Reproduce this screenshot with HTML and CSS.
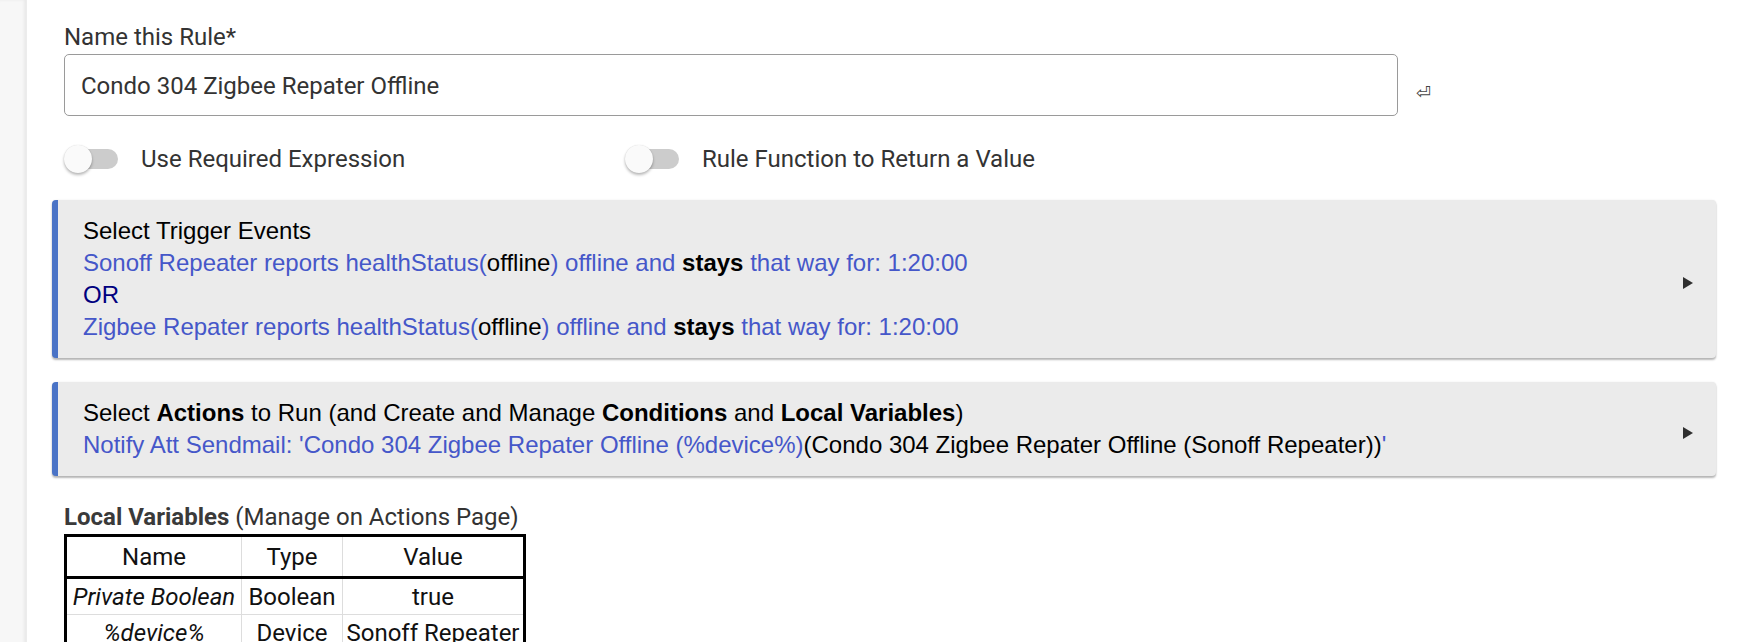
FILE: index.html
```html
<!DOCTYPE html>
<html>
<head>
<meta charset="utf-8">
<link rel="stylesheet" href="styles.css">
</head>
<body>
<div class="page">
  <div class="side"></div>
  <main class="main">
    <div class="field">
      <label class="label">Name this Rule*</label>
      <div class="input-row">
        <div class="input">Condo 304 Zigbee Repater Offline</div>
        <span class="enter">&#x23CE;</span>
      </div>
    </div>

    <div class="toggles">
      <div class="toggle-item">
        <span class="switch"><span class="track"></span><span class="thumb"></span></span>
        <span class="toggle-text">Use Required Expression</span>
      </div>
      <div class="toggle-item">
        <span class="switch"><span class="track"></span><span class="thumb"></span></span>
        <span class="toggle-text">Rule Function to Return a Value</span>
      </div>
    </div>

    <div class="card card-first">
      <div class="card-body">
        <div>Select Trigger Events</div>
        <div class="blue">Sonoff Repeater reports healthStatus(<span class="black">offline</span>) offline and <b class="black">stays</b> that way for: 1:20:00</div>
        <div class="navy">OR</div>
        <div class="blue">Zigbee Repater reports healthStatus(<span class="black">offline</span>) offline and <b class="black">stays</b> that way for: 1:20:00</div>
      </div>
      <svg class="arrow" width="10" height="12" viewBox="0 0 10 12"><polygon points="0,0 10,6 0,12" fill="#2f2f2f"/></svg>
    </div>

    <div class="card">
      <div class="card-body">
        <div>Select <b>Actions</b> to Run (and Create and Manage <b>Conditions</b> and <b>Local Variables</b>)</div>
        <div class="blue">Notify Att Sendmail: 'Condo 304 Zigbee Repater Offline (%device%)<span class="black">(Condo 304 Zigbee Repater Offline (Sonoff Repeater))</span>'</div>
      </div>
      <svg class="arrow" width="10" height="12" viewBox="0 0 10 12"><polygon points="0,0 10,6 0,12" fill="#2f2f2f"/></svg>
    </div>

    <div class="vars">
      <div class="vars-title"><b>Local Variables</b> (Manage on Actions Page)</div>
      <table class="vars-table">
        <thead>
          <tr><th class="c1">Name</th><th class="c2">Type</th><th class="c3">Value</th></tr>
        </thead>
        <tbody>
          <tr><td><i>Private Boolean</i></td><td>Boolean</td><td>true</td></tr>
          <tr><td><i>%device%</i></td><td>Device</td><td>Sonoff Repeater</td></tr>
        </tbody>
      </table>
    </div>
  </main>
</div>
</body>
</html>
```
FILE: styles.css
```css
html, body {
  margin: 0;
  padding: 0;
  background: #ffffff;
}
body {
  font-family: Roboto, "Liberation Sans", sans-serif;
  color: #333333;
  overflow: hidden;
}
.page {
  display: flex;
  min-height: 642px;
}
.side {
  width: 26px;
  flex: none;
  background: #f7f7f7;
  box-shadow: inset -2px 0 3px rgba(0,0,0,0.06);
  border-right: 1px solid #ececec;
}
.main {
  flex: 1;
  padding: 25px 42px 0 25px;
}
.field {
  margin-left: 12px;
}
.label {
  display: block;
  font-size: 24px;
  line-height: 24px;
  color: #333;
}
.input-row {
  display: flex;
  align-items: center;
  margin-top: 5px;
}
.input {
  width: 1316px;
  height: 60px;
  border: 1px solid #9a9a9a;
  border-radius: 5px;
  display: flex;
  align-items: center;
  padding-left: 16px;
  padding-top: 2px;
  box-sizing: content-box;
  font-size: 24px;
  color: #333;
}
.input {
  height: 58px;
}
.enter {
  font-family: "DejaVu Sans", sans-serif;
  font-size: 18px;
  color: #444;
  margin-left: 18px;
  margin-top: 14px;
}
.toggles {
  display: flex;
  margin-left: 12px;
  margin-top: 28px;
  height: 30px;
  align-items: center;
}
.toggle-item {
  display: flex;
  align-items: center;
}
.toggle-item:first-child {
  width: 561px;
}
.switch {
  position: relative;
  width: 54px;
  height: 28px;
  display: inline-block;
  flex: none;
}
.track {
  position: absolute;
  left: 6px;
  right: 0;
  top: 4px;
  height: 20px;
  border-radius: 10px;
  background: #cccccc;
}
.thumb {
  position: absolute;
  left: 0;
  top: 0;
  width: 28px;
  height: 28px;
  border-radius: 50%;
  background: #fafafa;
  box-shadow: 0 2px 3px rgba(0,0,0,0.28), 0 0 1px rgba(0,0,0,0.15);
}
.toggle-text {
  font-size: 24px;
  margin-left: 23px;
  color: #333;
}
.card {
  display: flex;
  align-items: center;
  background: #ebebeb;
  border-left: 6px solid #4a73c6;
  border-radius: 4px;
  box-shadow: 0 2px 2px rgba(0,0,0,0.28), 0 0 2px rgba(0,0,0,0.08);
  padding: 15px 23px 15px 25px;
  margin-top: 24px;
  font-family: "Liberation Sans", Arial, sans-serif;
  font-size: 24px;
  line-height: 32px;
  color: #000;
}
.card-first {
  margin-top: 26px;
}
.card-body {
  flex: 1;
}
.arrow {
  flex: none;
  margin-top: 8px;
}
.blue {
  color: #4557c9;
}
.black {
  color: #000;
}
.navy {
  color: #00007f;
}
.vars {
  margin-left: 12px;
  margin-top: 29px;
}
.vars-title {
  font-size: 24px;
  line-height: 24px;
  color: #333;
}
.vars-title b {
  font-weight: 700;
  color: #3a3a3a;
}
.vars-table {
  margin-top: 5px;
  border-collapse: collapse;
  border: 3px solid #000;
  font-size: 24px;
  line-height: 28px;
  color: #111;
}
.vars-table th {
  font-weight: 400;
  height: 39px;
  padding: 0;
  border-right: 1px solid #dddddd;
  border-bottom: 3px solid #000;
  text-align: center;
}
.vars-table td {
  height: 35px;
  padding: 0;
  border-right: 1px solid #dddddd;
  border-bottom: 1px solid #dddddd;
  text-align: center;
}
.c1 { width: 174px; }
.c2 { width: 100px; }
.c3 { width: 180px; }
```
